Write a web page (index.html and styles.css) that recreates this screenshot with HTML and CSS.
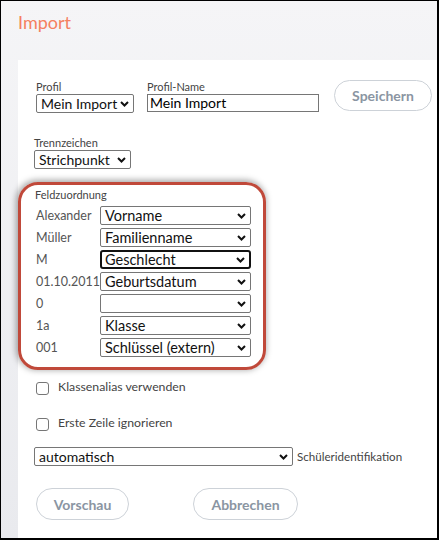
FILE: index.html
```html
<!DOCTYPE html>
<html lang="de">
<head>
<meta charset="utf-8">
<title>Import</title>
<link rel="stylesheet" href="styles.css">
</head>
<body>
<div class="frame">
  <h1 class="title">Import</h1>
  <div class="panel">
    <div class="row-top">
      <div class="field">
        <label class="small">Profil</label>
        <div class="sel sel-profil">Mein Import</div>
      </div>
      <div class="field field-name">
        <label class="small">Profil-Name</label>
        <div class="input">Mein Import</div>
      </div>
      <button class="btn btn-save">Speichern</button>
    </div>

    <div class="field field-trenn">
      <label class="small">Trennzeichen</label>
      <div class="sel sel-trenn">Strichpunkt</div>
    </div>

    <div class="mapping">
      <div class="small map-title">Feldzuordnung</div>
      <div class="map-rows">
        <div class="map-row"><span class="map-label">Alexander</span><div class="sel sel-map">Vorname</div></div>
        <div class="map-row"><span class="map-label">Müller</span><div class="sel sel-map">Familienname</div></div>
        <div class="map-row"><span class="map-label">M</span><div class="sel sel-map focus">Geschlecht</div></div>
        <div class="map-row"><span class="map-label">01.10.2011</span><div class="sel sel-map">Geburtsdatum</div></div>
        <div class="map-row"><span class="map-label">0</span><div class="sel sel-map"></div></div>
        <div class="map-row"><span class="map-label">1a</span><div class="sel sel-map">Klasse</div></div>
        <div class="map-row"><span class="map-label">001</span><div class="sel sel-map">Schlüssel (extern)</div></div>
      </div>
    </div>

    <div class="checks">
      <label class="check"><span class="box"></span><span>Klassenalias verwenden</span></label>
      <label class="check"><span class="box"></span><span>Erste Zeile ignorieren</span></label>
    </div>

    <div class="ident">
      <div class="sel sel-auto">automatisch</div>
      <span class="ident-label">Schüleridentifikation</span>
    </div>

    <div class="actions">
      <button class="btn btn-prev">Vorschau</button>
      <button class="btn btn-cancel">Abbrechen</button>
    </div>
  </div>
</div>
</body>
</html>
```
FILE: styles.css
```css
* { box-sizing: border-box; }
html, body { margin: 0; padding: 0; }
body { font-family: "Lato", "Liberation Sans", sans-serif; color: #333; }

.frame {
  width: 439px;
  height: 540px;
  border: 1px solid #000;
  border-right-width: 2px;
  border-bottom-width: 2px;
  background: linear-gradient(#f5f5f7, #e9eaee);
  display: flex;
  flex-direction: column;
}

.title {
  margin: 0;
  padding: 10px 0 0 17px;
  height: 59px;
  font-size: 18px;
  font-weight: 400;
  color: #f5805f;
  line-height: 22px;
}

.panel {
  flex: 1;
  margin-left: 17px;
  background: #fff;
  padding: 20px 0 0 18px;
  display: flex;
  flex-direction: column;
  align-items: flex-start;
}

.small {
  display: block;
  font-size: 11px;
  line-height: 13px;
  color: #444;
}

.row-top { display: flex; align-items: flex-start; }
.field { display: flex; flex-direction: column; align-items: flex-start; }
.field .small { margin-bottom: 1px; }
.field-name { margin-left: 13px; }

.sel {
  position: relative;
  height: 19px;
  border: 1px solid #767676;
  border-radius: 2px;
  font-size: 14.5px;
  line-height: 17px;
  color: #111;
  padding: 0 18px 0 4px;
  white-space: nowrap;
  background: #fff url("data:image/svg+xml;utf8,<svg xmlns='http://www.w3.org/2000/svg' width='9' height='6' viewBox='0 0 9 6'><path d='M1 1l3.5 3.5L8 1' fill='none' stroke='%23111' stroke-width='2'/></svg>") no-repeat right 4px center;
}
.sel-profil { width: 98px; font-size: 14px; }
.sel-trenn { width: 97px; font-size: 14px; }

.input {
  width: 172px;
  height: 18px;
  border: 1px solid #767676;
  font-size: 14px;
  line-height: 16px;
  color: #000;
  padding: 0 2px;
}

.btn {
  font-family: "Lato", "Liberation Sans", sans-serif;
  font-weight: 700;
  font-size: 14px;
  color: #8a95a2;
  background: #fff;
  border: 1px solid #cdd2d8;
  border-radius: 16px;
  height: 32px;
  padding: 0;
}
.btn-save { width: 98px; margin-left: 15px; height: 31px; }

.field-trenn { margin-top: 23px; margin-left: -2px; }

.mapping {
  margin-top: 13px;
  margin-left: -18px;
  width: 248px;
  border: 3px solid #c0493a;
  border-radius: 20px;
  box-shadow: -1px -1px 6px 1px rgba(0, 0, 0, 0.35);
  padding: 3px 0 10px 14px;
}
.map-title { margin-bottom: 5px; }
.map-rows { display: flex; flex-direction: column; gap: 3px; padding-left: 1px; }
.map-row { display: flex; align-items: center; height: 19px; }
.map-label { width: 64px; font-size: 12.5px; color: #555; white-space: nowrap; }
.sel-map { width: 151px; }
.sel.focus { border: 2px solid #111; border-radius: 3px; padding-left: 3px; line-height: 15px; }

.checks { margin-top: 11px; display: flex; flex-direction: column; gap: 22px; }
.check { display: flex; align-items: center; font-size: 12.3px; color: #444; height: 14px; }
.check span:last-child { position: relative; top: -2px; }
.box {
  width: 13px;
  height: 13px;
  border: 1px solid #767676;
  border-radius: 3px;
  margin-right: 9px;
}

.ident { display: flex; align-items: center; margin-top: 16px; margin-left: -2px; }
.sel-auto { width: 259px; font-size: 14px; }
.ident-label { font-size: 11.6px; color: #444; margin-left: 4px; }

.actions { display: flex; margin-top: 22px; }
.btn-prev { width: 93px; }
.btn-cancel { width: 105px; margin-left: 64px; }
```
